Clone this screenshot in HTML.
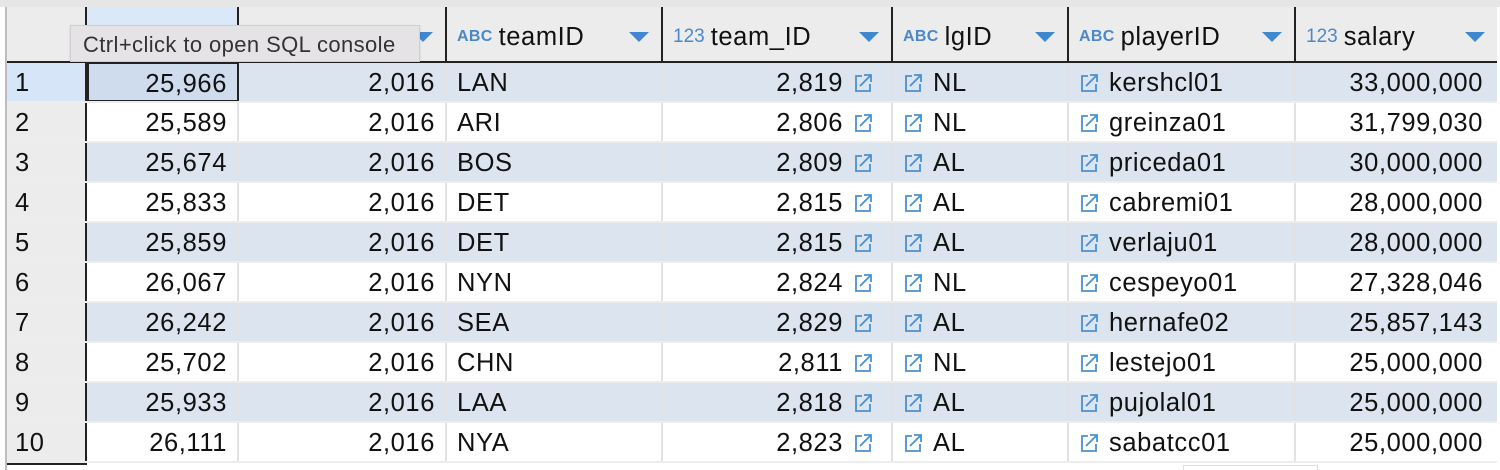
<!DOCTYPE html>
<html><head><meta charset="utf-8"><style>
*{box-sizing:border-box;margin:0;padding:0}
body{width:1500px;height:470px;background:#fff;font-family:"Liberation Sans",Helvetica,Arial,sans-serif;font-size:25.5px;letter-spacing:0.6px;color:#111;position:relative;overflow:hidden}
.top{position:absolute;left:0;top:0;width:1500px;height:7px;background:#e6e6e6}
.lline{position:absolute;left:5px;top:7px;width:2px;height:463px;background:#bdbdbd}
.hdr{position:absolute;top:7px;left:7px;height:56px;width:1490px;background:#ececec;border-bottom:2px solid #222}
.hc{position:absolute;top:0;height:54px;border-right:2px solid #222;display:flex;align-items:center;padding-left:10px;padding-top:6px}
.hc .t{font-size:16px;font-weight:bold;color:#4a88c8;margin-right:6px;letter-spacing:0.3px}
.hc .n{color:#4a8ac9;font-size:19px;margin-right:6px;font-weight:normal;letter-spacing:0}
.arr{position:absolute;right:12px;top:25px;width:0;height:0;border-left:10px solid transparent;border-right:10px solid transparent;border-top:10px solid #3f87cf}
.row{position:absolute;left:7px;width:1490px;height:40px}
.odd{background:#dce4ef}
.c{position:absolute;top:0;height:38px;line-height:40px;border-right:2px solid #e2e2e2;white-space:nowrap}
.r{text-align:right;padding-right:10px}
.l{padding-left:10px}
.rh{left:0;width:80px;background:#ececec;border-right:2px solid #222;border-bottom:0;padding-left:8px}
.gl{position:absolute;left:0;bottom:0;width:100%;height:2px;background:#ededed}
.ic{display:inline-block;width:20px;height:20px;vertical-align:-2px;margin-right:10px}
.ic2{margin-right:8px;margin-left:10px}
.tip{position:absolute;left:70px;top:25px;width:350px;height:37px;background:#e6e3e6;border:1px solid #cfcfcf;font-size:22px;letter-spacing:0.4px;color:#333;line-height:38px;padding-left:12px;box-shadow:0 1px 2px rgba(0,0,0,.15)}
</style></head><body>
<div class="top"></div>
<div class="lline"></div>
<div class="hdr">
 <div class="hc" style="left:0;width:80px"></div>
 <div class="hc" style="left:80px;width:152px;background:#dbe8f7"></div>
 <div class="hc" style="left:232px;width:208px"><span class="arr"></span></div>
 <div class="hc" style="left:440px;width:216px"><span class="t">ABC</span>teamID<span class="arr"></span></div>
 <div class="hc" style="left:656px;width:230px"><span class="t n">123</span>team_ID<span class="arr"></span></div>
 <div class="hc" style="left:886px;width:176px"><span class="t">ABC</span>lgID<span class="arr"></span></div>
 <div class="hc" style="left:1062px;width:227px"><span class="t">ABC</span>playerID<span class="arr"></span></div>
 <div class="hc" style="left:1289px;width:201px;border-right:0"><span class="t n">123</span>salary<span class="arr"></span></div>
</div>
<div class="tip">Ctrl+click to open SQL console</div>

<svg width="0" height="0" style="position:absolute"><defs><symbol id="lk" viewBox="0 0 20 20"><path d="M9 3H3V18H17V11" fill="none" stroke="#4a90d2" stroke-width="1.8"/><path d="M7 13L17.5 2.5M11 2H18V9" fill="none" stroke="#4a90d2" stroke-width="1.8"/></symbol></defs></svg>

<div class="row odd" style="top:63px"><div class="c rh" style="background:#d6e6f8">1</div><div class="c r" style="left:80px;width:152px;border:2px solid #222;height:40px;top:-1px;background:#cfdcee">25,966</div><div class="c r" style="left:232px;width:208px">2,016</div><div class="c l" style="left:440px;width:216px">LAN</div><div class="c r" style="left:656px;width:230px">2,819<svg class="ic ic2"><use href="#lk"/></svg></div><div class="c l" style="left:886px;width:176px"><svg class="ic"><use href="#lk"/></svg>NL</div><div class="c l" style="left:1062px;width:227px"><svg class="ic"><use href="#lk"/></svg>kershcl01</div><div class="c r" style="left:1289px;width:201px;border:0;padding-right:14px">33,000,000</div><div class="gl"></div></div>
<div class="row" style="top:103px"><div class="c rh">2</div><div class="c r" style="left:80px;width:152px">25,589</div><div class="c r" style="left:232px;width:208px">2,016</div><div class="c l" style="left:440px;width:216px">ARI</div><div class="c r" style="left:656px;width:230px">2,806<svg class="ic ic2"><use href="#lk"/></svg></div><div class="c l" style="left:886px;width:176px"><svg class="ic"><use href="#lk"/></svg>NL</div><div class="c l" style="left:1062px;width:227px"><svg class="ic"><use href="#lk"/></svg>greinza01</div><div class="c r" style="left:1289px;width:201px;border:0;padding-right:14px">31,799,030</div><div class="gl"></div></div>
<div class="row odd" style="top:143px"><div class="c rh">3</div><div class="c r" style="left:80px;width:152px">25,674</div><div class="c r" style="left:232px;width:208px">2,016</div><div class="c l" style="left:440px;width:216px">BOS</div><div class="c r" style="left:656px;width:230px">2,809<svg class="ic ic2"><use href="#lk"/></svg></div><div class="c l" style="left:886px;width:176px"><svg class="ic"><use href="#lk"/></svg>AL</div><div class="c l" style="left:1062px;width:227px"><svg class="ic"><use href="#lk"/></svg>priceda01</div><div class="c r" style="left:1289px;width:201px;border:0;padding-right:14px">30,000,000</div><div class="gl"></div></div>
<div class="row" style="top:183px"><div class="c rh">4</div><div class="c r" style="left:80px;width:152px">25,833</div><div class="c r" style="left:232px;width:208px">2,016</div><div class="c l" style="left:440px;width:216px">DET</div><div class="c r" style="left:656px;width:230px">2,815<svg class="ic ic2"><use href="#lk"/></svg></div><div class="c l" style="left:886px;width:176px"><svg class="ic"><use href="#lk"/></svg>AL</div><div class="c l" style="left:1062px;width:227px"><svg class="ic"><use href="#lk"/></svg>cabremi01</div><div class="c r" style="left:1289px;width:201px;border:0;padding-right:14px">28,000,000</div><div class="gl"></div></div>
<div class="row odd" style="top:223px"><div class="c rh">5</div><div class="c r" style="left:80px;width:152px">25,859</div><div class="c r" style="left:232px;width:208px">2,016</div><div class="c l" style="left:440px;width:216px">DET</div><div class="c r" style="left:656px;width:230px">2,815<svg class="ic ic2"><use href="#lk"/></svg></div><div class="c l" style="left:886px;width:176px"><svg class="ic"><use href="#lk"/></svg>AL</div><div class="c l" style="left:1062px;width:227px"><svg class="ic"><use href="#lk"/></svg>verlaju01</div><div class="c r" style="left:1289px;width:201px;border:0;padding-right:14px">28,000,000</div><div class="gl"></div></div>
<div class="row" style="top:263px"><div class="c rh">6</div><div class="c r" style="left:80px;width:152px">26,067</div><div class="c r" style="left:232px;width:208px">2,016</div><div class="c l" style="left:440px;width:216px">NYN</div><div class="c r" style="left:656px;width:230px">2,824<svg class="ic ic2"><use href="#lk"/></svg></div><div class="c l" style="left:886px;width:176px"><svg class="ic"><use href="#lk"/></svg>NL</div><div class="c l" style="left:1062px;width:227px"><svg class="ic"><use href="#lk"/></svg>cespeyo01</div><div class="c r" style="left:1289px;width:201px;border:0;padding-right:14px">27,328,046</div><div class="gl"></div></div>
<div class="row odd" style="top:303px"><div class="c rh">7</div><div class="c r" style="left:80px;width:152px">26,242</div><div class="c r" style="left:232px;width:208px">2,016</div><div class="c l" style="left:440px;width:216px">SEA</div><div class="c r" style="left:656px;width:230px">2,829<svg class="ic ic2"><use href="#lk"/></svg></div><div class="c l" style="left:886px;width:176px"><svg class="ic"><use href="#lk"/></svg>AL</div><div class="c l" style="left:1062px;width:227px"><svg class="ic"><use href="#lk"/></svg>hernafe02</div><div class="c r" style="left:1289px;width:201px;border:0;padding-right:14px">25,857,143</div><div class="gl"></div></div>
<div class="row" style="top:343px"><div class="c rh">8</div><div class="c r" style="left:80px;width:152px">25,702</div><div class="c r" style="left:232px;width:208px">2,016</div><div class="c l" style="left:440px;width:216px">CHN</div><div class="c r" style="left:656px;width:230px">2,811<svg class="ic ic2"><use href="#lk"/></svg></div><div class="c l" style="left:886px;width:176px"><svg class="ic"><use href="#lk"/></svg>NL</div><div class="c l" style="left:1062px;width:227px"><svg class="ic"><use href="#lk"/></svg>lestejo01</div><div class="c r" style="left:1289px;width:201px;border:0;padding-right:14px">25,000,000</div><div class="gl"></div></div>
<div class="row odd" style="top:383px"><div class="c rh">9</div><div class="c r" style="left:80px;width:152px">25,933</div><div class="c r" style="left:232px;width:208px">2,016</div><div class="c l" style="left:440px;width:216px">LAA</div><div class="c r" style="left:656px;width:230px">2,818<svg class="ic ic2"><use href="#lk"/></svg></div><div class="c l" style="left:886px;width:176px"><svg class="ic"><use href="#lk"/></svg>AL</div><div class="c l" style="left:1062px;width:227px"><svg class="ic"><use href="#lk"/></svg>pujolal01</div><div class="c r" style="left:1289px;width:201px;border:0;padding-right:14px">25,000,000</div><div class="gl"></div></div>
<div class="row" style="top:423px"><div class="c rh">10</div><div class="c r" style="left:80px;width:152px">26,111</div><div class="c r" style="left:232px;width:208px">2,016</div><div class="c l" style="left:440px;width:216px">NYA</div><div class="c r" style="left:656px;width:230px">2,823<svg class="ic ic2"><use href="#lk"/></svg></div><div class="c l" style="left:886px;width:176px"><svg class="ic"><use href="#lk"/></svg>AL</div><div class="c l" style="left:1062px;width:227px"><svg class="ic"><use href="#lk"/></svg>sabatcc01</div><div class="c r" style="left:1289px;width:201px;border:0;padding-right:14px">25,000,000</div><div class="gl"></div></div>
<div style="position:absolute;left:7px;top:463px;width:80px;height:2px;background:#222"></div>
<div style="position:absolute;left:1183px;top:465px;width:135px;height:5px;border:1px solid #ddd;border-bottom:0"></div>
</body></html>
